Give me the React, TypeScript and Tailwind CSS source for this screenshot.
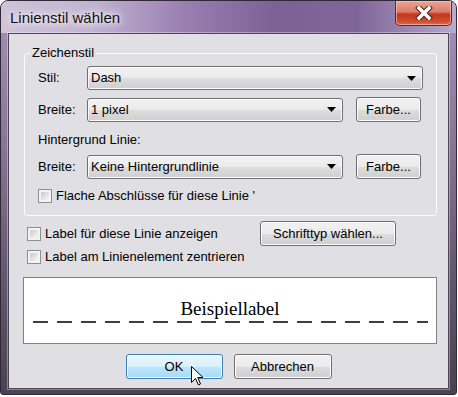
import React from "react";

function Arrow() {
  return (
    <svg width="9" height="5" viewBox="0 0 9 5" className="block">
      <path d="M0 0 H9 L4.5 5 Z" fill="#000" />
    </svg>
  );
}

function Dropdown({ value, className = "" }: { value: string; className?: string }) {
  return (
    <div
      className={`flex h-[24px] items-center justify-between rounded-[3px] border border-[#707070] bg-[linear-gradient(180deg,#f2f2f2_0%,#ebebeb_50%,#dddddd_51%,#cfcfcf_100%)] pl-[3px] pr-[6px] shadow-[inset_0_0_0_1px_#fcfcfc] ${className}`}
    >
      <span>{value}</span>
      <Arrow />
    </div>
  );
}

function Button({ label, className = "" }: { label: string; className?: string }) {
  return (
    <div
      className={`flex h-[25px] items-center justify-center rounded-[3px] border border-[#707070] bg-[linear-gradient(180deg,#f2f2f2_0%,#ebebeb_50%,#dddddd_51%,#cfcfcf_100%)] shadow-[inset_0_0_0_1px_#fcfcfc] ${className}`}
    >
      {label}
    </div>
  );
}

function Checkbox({ label, className = "" }: { label: string; className?: string }) {
  return (
    <div className={`flex h-[14px] items-center gap-[4px] ${className}`}>
      <div className="h-[14px] w-[14px] shrink-0 border border-[#8e8f8f] bg-[#f4f4f4] p-[2px]">
        <div className="h-full w-full bg-[linear-gradient(135deg,#cbcbcb_0%,#e6e6e6_60%,#f7f7f7_100%)]" />
      </div>
      <span className="whitespace-nowrap">{label}</span>
    </div>
  );
}

function CloseButton() {
  return (
    <div className="mr-[4px] flex h-[25px] w-[57px] items-center justify-center rounded-b-[5px] border border-t-0 border-[#5b2a2a] bg-[linear-gradient(180deg,#eba595_0%,#dc7c68_45%,#c4361f_55%,#cd4f33_85%,#de7050_100%)] shadow-[inset_0_0_0_1px_rgba(255,210,200,0.55)]">
      <svg width="18" height="14" viewBox="0 0 18 14">
        <path d="M4 2 L14 12 M14 2 L4 12" stroke="#4a2424" strokeWidth="5.5" strokeLinecap="square" />
        <path d="M4 2 L14 12 M14 2 L4 12" stroke="#ffffff" strokeWidth="3.5" strokeLinecap="square" />
      </svg>
    </div>
  );
}

function Cursor() {
  return (
    <svg width="13" height="20" viewBox="0 0 13 20" className="absolute left-[191px] top-[366px]">
      <path
        d="M0.5 0.5 L0.5 16.5 L4.5 12.5 L7.5 19 L9.5 18 L6.8 11.5 L12 11.5 Z"
        fill="#fff"
        stroke="#000"
        strokeWidth="1"
        strokeLinejoin="miter"
      />
    </svg>
  );
}

export default function App() {
  return (
    <div className="relative h-[397px] w-[458px] bg-white font-['Liberation_Sans',Arial,sans-serif] text-[13px] text-black">
      <div className="flex h-[395px] w-[457px] flex-col overflow-hidden rounded-t-[8px] rounded-b-[3px] border border-[#2f2835] bg-[linear-gradient(180deg,#a593b9_0%,#8a7699_35%,#64566f_70%,#4a4252_100%)]">
        <div className="flex h-[32px] shrink-0 items-start justify-between bg-[linear-gradient(90deg,#cfc4d9_0%,#c2b4d1_20%,#9a80b1_40%,#7c6195_60%,#7f6598_78%,#a998c0_95%,#b9acca_100%)]">
          <span className="pl-[9px] pt-[8px] text-[15px] leading-[17px] text-[#111] [text-shadow:0_0_8px_#efe9f4,0_0_8px_#efe9f4,0_0_4px_#f4f0f7]">
            Linienstil wählen
          </span>
          <CloseButton />
        </div>

        <div className="mx-[7px] flex flex-1 flex-col border border-[#4d4556] bg-[#e0dfe3] pl-[15px] pt-[12px] shadow-[0_0_0_1px_rgba(255,255,255,0.35)]">
          <fieldset className="w-[413px] rounded-[3px] border border-[#fbfbfb] px-[5px] pb-[12px]">
            <legend className="px-[2px] leading-[14px]">Zeichenstil</legend>
            <div className="flex flex-col px-[8px]">
              <div className="mt-[6px] flex items-center">
                <span className="w-[49px]">Stil:</span>
                <Dropdown value="Dash" className="flex-1" />
              </div>
              <div className="mt-[7px] flex h-[25px] items-center">
                <span className="w-[49px]">Breite:</span>
                <Dropdown value="1 pixel" className="w-[256px]" />
                <Button label="Farbe..." className="ml-[13px] w-[65px]" />
              </div>
              <div className="mt-[10px] leading-[15px]">Hintergrund Linie:</div>
              <div className="mt-[7px] flex h-[25px] items-center">
                <span className="w-[49px]">Breite:</span>
                <Dropdown value="Keine Hintergrundlinie" className="w-[256px]" />
                <Button label="Farbe..." className="ml-[13px] w-[65px]" />
              </div>
              <Checkbox label="Flache Abschlüsse für diese Linie '" className="mt-[10px]" />
            </div>
          </fieldset>

          <div className="mt-[5px] flex h-[25px] items-center pl-[3px]">
            <Checkbox label="Label für diese Linie anzeigen" className="w-[233px]" />
            <Button label="Schrifttyp wählen..." className="w-[136px]" />
          </div>
          <Checkbox label="Label am Linienelement zentrieren" className="mt-[4px] pl-[3px]" />

          <div className="ml-[-1px] mt-[13px] flex h-[67px] w-[414px] flex-col items-center border border-[#828282] bg-white pt-[21px]">
            <span className="font-['Liberation_Serif','Times_New_Roman',serif] text-[19px] leading-[19px]">
              Beispiellabel
            </span>
            <svg width="395" height="4" viewBox="0 0 395 4" className="mt-[2px] block">
              <line x1="0" y1="2" x2="395" y2="2" stroke="#000" strokeWidth="1.6" strokeDasharray="15 9" />
            </svg>
          </div>

          <div className="mt-[10px] flex justify-center gap-[11px] pr-[15px]">
            <div className="flex h-[25px] w-[97px] items-center justify-center rounded-[3px] border border-[#3c7fb1] bg-[linear-gradient(180deg,#eaf6fd_0%,#d9f0fc_50%,#bee6fd_51%,#a7d9f5_100%)] shadow-[inset_0_0_0_1px_#f4fbff]">
              OK
            </div>
            <Button label="Abbrechen" className="w-[98px]" />
          </div>
        </div>
        <div className="h-[5px] shrink-0" />
      </div>
      <Cursor />
    </div>
  );
}
